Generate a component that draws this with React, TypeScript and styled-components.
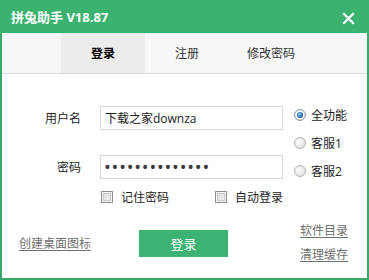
import React from "react";
import styled, { createGlobalStyle } from "styled-components";

const Global = createGlobalStyle`
  html, body { margin: 0; padding: 0; background: #fff; }
  body { font-family: "Open Sans", "Noto Sans CJK SC", sans-serif; font-size: 12px; color: #222; }
  * { box-sizing: border-box; }
`;

const Window = styled.div`
  width: 369px;
  height: 280px;
  display: flex;
  flex-direction: column;
  border: 2px solid #3aa86b;
  border-top: none;
  background: #fff;
`;

const TitleBar = styled.div`
  height: 33px;
  margin: 0 -2px;
  padding: 0 14px 0 11px;
  background: #3cb270;
  display: flex;
  align-items: center;
  justify-content: space-between;
`;

const Title = styled.div`
  color: #fff;
  font-size: 13px;
  font-weight: 700;
  margin-top: -1px;
`;

const CloseButton = styled.button`
  width: 13px;
  height: 13px;
  padding: 0;
  border: none;
  background: transparent;
  display: flex;
  margin-top: 3px;
`;

const TabBar = styled.div`
  height: 41px;
  background: #f7f7f7;
  border-bottom: 1px solid #dadada;
  padding-left: 59px;
  display: flex;
`;

const Tab = styled.div<{ $active?: boolean }>`
  width: 84px;
  display: flex;
  align-items: center;
  justify-content: center;
  font-size: 12px;
  color: ${(p) => (p.$active ? "#000" : "#333")};
  font-weight: ${(p) => (p.$active ? 700 : 400)};
  background: ${(p) => (p.$active ? "#ececec" : "transparent")};
`;

const Body = styled.div`
  flex: 1;
  display: flex;
  flex-direction: column;
`;

const Main = styled.div`
  display: flex;
  align-items: flex-start;
  padding-top: 27px;
`;

const FormCol = styled.div`
  display: flex;
  flex-direction: column;
  padding-top: 5px;
`;

const FieldRow = styled.div<{ $gap?: number }>`
  display: flex;
  align-items: center;
  margin-top: ${(p) => p.$gap ?? 0}px;
`;

const Label = styled.label`
  width: 79px;
  text-align: right;
  margin-right: 19px;
  font-size: 12px;
  color: #222;
`;

const Input = styled.input`
  width: 183px;
  height: 24px;
  border: 1px solid #d6d6d6;
  padding: 0 4px;
  font-family: "Open Sans", "Noto Sans CJK SC", sans-serif;
  font-size: 12px;
  color: #222;
  outline: none;
  background: #fff;
`;

const PasswordInput = styled(Input)`
  font-size: 18px;
  letter-spacing: 0.8px;
  color: #3a3a3a;
  padding-left: 3px;
`;

const CheckRow = styled.div`
  display: flex;
  margin-top: 9px;
  padding-left: 99px;
`;

const CheckItem = styled.label<{ $width?: number }>`
  display: flex;
  align-items: center;
  width: ${(p) => (p.$width ? `${p.$width}px` : "auto")};
  font-size: 12px;
  color: #222;
`;

const CheckBox = styled.span`
  width: 12px;
  height: 12px;
  margin-right: 8px;
  border: 1px solid #8e8f8f;
  background: linear-gradient(135deg, #d8d8d8 0%, #f4f4f4 100%);
  box-shadow: inset 0 0 0 1px #f6f6f6, inset 0 0 0 2px #c9c9c9;
`;

const RadioCol = styled.div`
  display: flex;
  flex-direction: column;
  margin-left: 11px;
`;

const RadioItem = styled.label`
  height: 28px;
  display: flex;
  align-items: center;
  font-size: 12px;
  color: #222;
`;

const RadioDot = styled.span<{ $checked?: boolean }>`
  width: 12px;
  height: 12px;
  border-radius: 50%;
  margin-right: 5px;
  border: 1px solid ${(p) => (p.$checked ? "#8a99a8" : "#b3b3b3")};
  background: radial-gradient(circle at 35% 35%, #fbfbfb 0%, #dcdcdc 100%);
  display: flex;
  align-items: center;
  justify-content: center;
  &::after {
    content: "";
    display: ${(p) => (p.$checked ? "block" : "none")};
    width: 6px;
    height: 6px;
    border-radius: 50%;
    background: radial-gradient(circle at 40% 40%, #9fd2f7 0%, #3b7fc4 45%, #123f7a 100%);
  }
`;

const Footer = styled.div`
  margin-top: auto;
  margin-bottom: 12px;
  height: 46px;
  display: flex;
  align-items: center;
  padding-left: 17px;
`;

const Link = styled.a`
  font-size: 12px;
  color: #6e6e6e;
  text-decoration: underline;
  text-underline-offset: 2px;
  cursor: pointer;
`;

const LoginButton = styled.button`
  width: 89px;
  height: 27px;
  margin-left: 48px;
  border: none;
  background: #3db272;
  color: #fff;
  font-family: "Open Sans", "Noto Sans CJK SC", sans-serif;
  font-size: 13px;
  padding: 0;
`;

const LinkCol = styled.div`
  display: flex;
  flex-direction: column;
  margin-left: 72px;
  gap: 6px;
  margin-top: -2px;
`;

export default function App() {
  return (
    <>
      <Global />
      <Window>
        <TitleBar>
          <Title>拼兔助手 V18.87</Title>
          <CloseButton aria-label="关闭">
            <svg width="13" height="13" viewBox="0 0 13 13">
              <path d="M2 2 L11 11 M11 2 L2 11" stroke="#fff" strokeWidth="2.2" strokeLinecap="square" />
            </svg>
          </CloseButton>
        </TitleBar>
        <TabBar>
          <Tab $active>登录</Tab>
          <Tab>注册</Tab>
          <Tab>修改密码</Tab>
        </TabBar>
        <Body>
          <Main>
            <FormCol>
              <FieldRow>
                <Label>用户名</Label>
                <Input defaultValue="下载之家downza" />
              </FieldRow>
              <FieldRow $gap={25}>
                <Label>密码</Label>
                <PasswordInput type="password" defaultValue="12345678901234" />
              </FieldRow>
              <CheckRow>
                <CheckItem $width={114}>
                  <CheckBox />
                  记住密码
                </CheckItem>
                <CheckItem>
                  <CheckBox />
                  自动登录
                </CheckItem>
              </CheckRow>
            </FormCol>
            <RadioCol>
              <RadioItem>
                <RadioDot $checked />
                全功能
              </RadioItem>
              <RadioItem>
                <RadioDot />
                客服1
              </RadioItem>
              <RadioItem>
                <RadioDot />
                客服2
              </RadioItem>
            </RadioCol>
          </Main>
          <Footer>
            <Link>创建桌面图标</Link>
            <LoginButton>登录</LoginButton>
            <LinkCol>
              <Link>软件目录</Link>
              <Link>清理缓存</Link>
            </LinkCol>
          </Footer>
        </Body>
      </Window>
    </>
  );
}
